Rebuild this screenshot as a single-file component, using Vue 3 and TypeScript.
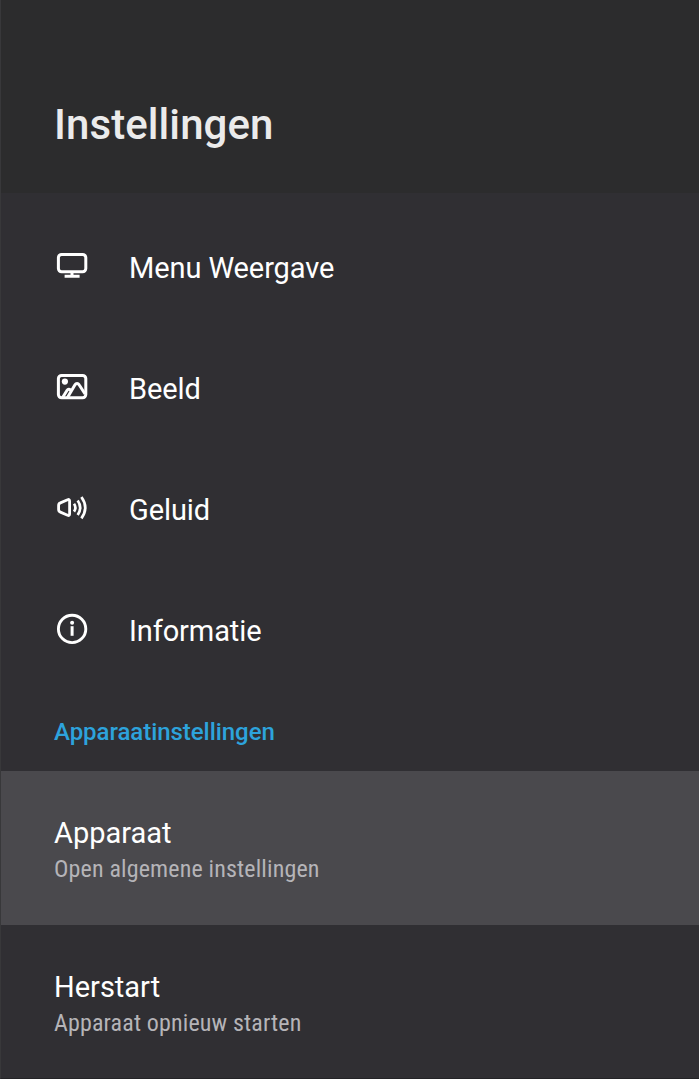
<script setup lang="ts">
type IconName = 'display' | 'picture' | 'sound' | 'info'

interface MenuItem {
  icon: IconName
  label: string
}

interface DeviceItem {
  id: string
  title: string
  subtitle: string
  focused: boolean
}

const menuItems: MenuItem[] = [
  { icon: 'display', label: 'Menu Weergave' },
  { icon: 'picture', label: 'Beeld' },
  { icon: 'sound', label: 'Geluid' },
  { icon: 'info', label: 'Informatie' },
]

const deviceItems: DeviceItem[] = [
  { id: 'device', title: 'Apparaat', subtitle: 'Open algemene instellingen', focused: true },
  { id: 'restart', title: 'Herstart', subtitle: 'Apparaat opnieuw starten', focused: false },
]
</script>

<template>
  <main class="panel">
    <header class="header">
      <h1 class="title">Instellingen</h1>
    </header>
    <nav class="menu">
      <div v-for="item in menuItems" :key="item.icon" class="row">
        <svg class="icon" viewBox="0 0 32 32" fill="none" stroke="#fff" stroke-width="3">
          <template v-if="item.icon === 'display'">
            <rect x="2.4" y="4.4" width="27.4" height="17.4" rx="3.2" />
            <path d="M16 22v4M8.6 26.3h15" />
          </template>
          <template v-else-if="item.icon === 'picture'">
            <rect x="2.4" y="4.4" width="27.4" height="22.4" rx="3.2" />
            <circle cx="8.9" cy="10.6" r="3.1" fill="#fff" stroke="none" />
            <path d="M6.6 26.5l4.5-7.2c.8-1.2 2.4-1.3 3.4-.1M11.5 26.5L19 13.7c1-1.7 3.1-1.7 4.1 0l6 9.3" />
          </template>
          <template v-else-if="item.icon === 'sound'">
            <path d="M2.6 13.4q0-1.9 1.8-2.5l7.2-3.2q2-.7 2 1.2v13.2q0 1.9-2 1.2l-7.2-3.2q-1.8-.6-1.8-2.5z" stroke-width="2.8" />
            <path d="M18 11.8q2.8 3.9 0 7.8M21.7 8.5q5 7.2 0 14.4M25.4 5q7.7 10.7 0 21.4" stroke-width="2.7" />
          </template>
          <template v-else>
            <circle cx="16.1" cy="15.9" r="13.7" stroke-width="2.9" />
            <circle cx="16.1" cy="9.7" r="2" fill="#fff" stroke="none" />
            <path d="M16.1 13.2v9.6" />
          </template>
        </svg>
        <span class="label">{{ item.label }}</span>
      </div>
    </nav>
    <h2 class="section">Apparaatinstellingen</h2>
    <section>
      <div v-for="item in deviceItems" :key="item.id" :class="['device', { focused: item.focused }]">
        <div class="name">{{ item.title }}</div>
        <div class="subtitle">{{ item.subtitle }}</div>
      </div>
    </section>
  </main>
</template>

<style>
body {
  margin: 0;
  background: #302f33;
}
</style>

<style scoped>
.panel {
  box-sizing: border-box;
  width: 100%;
  height: 1079px;
  overflow: hidden;
  background: #302f33;
  border-left: 1px solid #38383a;
  border-bottom: 1px solid #242427;
  font-family: Roboto, "Liberation Sans", sans-serif;
  color: #fff;
  white-space: nowrap;
}
.header {
  box-sizing: border-box;
  height: 193px;
  padding: 100px 0 0 53px;
  background: #2c2c2d;
}
.title {
  margin: 0;
  font-size: 42px;
  line-height: 50px;
  font-weight: 500;
  letter-spacing: 0.08px;
  color: #ebebeb;
}
.menu {
  padding-top: 14px;
}
.row {
  display: flex;
  align-items: center;
  height: 121px;
  padding-left: 54px;
}
.icon {
  width: 32px;
  height: 32px;
  margin: 0 41px 4px 1px;
}
.label,
.name {
  font-size: 29px;
  line-height: 36px;
}
.label {
  letter-spacing: -0.1px;
}
.section {
  margin: 0;
  height: 80px;
  padding-left: 53px;
  font-size: 24px;
  line-height: 82px;
  font-weight: 500;
  letter-spacing: -0.05px;
  color: #2da3dc;
}
.device {
  box-sizing: border-box;
  height: 154px;
  padding: 44px 0 0 53px;
}
.focused {
  background: #4a494d;
}
.subtitle {
  font-family: "Roboto Condensed", Roboto, sans-serif;
  font-stretch: 75%;
  font-size: 24px;
  line-height: 36px;
  letter-spacing: 0.15px;
  color: #b5b4b8;
}
</style>
